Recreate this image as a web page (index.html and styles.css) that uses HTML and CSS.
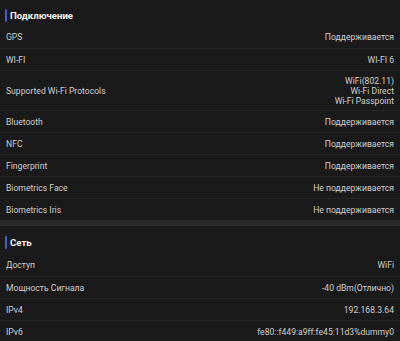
FILE: index.html
```html
<!DOCTYPE html>
<html lang="ru">
<head>
<meta charset="utf-8">
<link rel="stylesheet" href="styles.css">
</head>
<body>
<div class="page">
  <section class="section first">
    <h2 class="header"><span class="mark"></span>Подключение</h2>
    <div class="row"><span class="label">GPS</span><span class="value">Поддерживается</span></div>
    <div class="row"><span class="label">WI-FI</span><span class="value">WI-FI 6</span></div>
    <div class="row tall"><span class="label">Supported Wi-Fi Protocols</span><span class="value">WiFi(802.11)<br>Wi-Fi Direct<br>Wi-Fi Passpoint</span></div>
    <div class="row"><span class="label">Bluetooth</span><span class="value">Поддерживается</span></div>
    <div class="row"><span class="label">NFC</span><span class="value">Поддерживается</span></div>
    <div class="row"><span class="label">Fingerprint</span><span class="value">Поддерживается</span></div>
    <div class="row"><span class="label">Biometrics Face</span><span class="value">Не поддерживается</span></div>
    <div class="row"><span class="label">Biometrics Iris</span><span class="value">Не поддерживается</span></div>
  </section>
  <div class="band"></div>
  <section class="section">
    <h2 class="header"><span class="mark"></span>Сеть</h2>
    <div class="row"><span class="label">Доступ</span><span class="value">WiFi</span></div>
    <div class="row"><span class="label">Мощность Сигнала</span><span class="value">-40 dBm(Отлично)</span></div>
    <div class="row"><span class="label">IPv4</span><span class="value">192.168.3.64</span></div>
    <div class="row"><span class="label">IPv6</span><span class="value">fe80::f449:a9ff:fe45:11d3%dummy0</span></div>
  </section>
</div>
</body>
</html>
```
FILE: styles.css
```css
html, body {
  margin: 0;
  padding: 0;
  background: #1a1a1a;
}
body {
  font-family: Roboto, "Noto Sans", "Liberation Sans", sans-serif;
  font-size: 8.6px;
  color: #cfcfcf;
  overflow: hidden;
}
.page {
  width: 400px;
}
.header {
  margin: 0;
  display: flex;
  align-items: center;
  gap: 3px;
  height: 28px;
  padding: 4px 6px 0 5px;
  box-sizing: border-box;
  font-size: 9.6px;
  font-weight: 700;
  color: #f2f2f2;
}
.first .header {
  height: 26px;
  padding-top: 4px;
}
.mark {
  width: 2px;
  height: 13px;
  background: #3b5fe0;
  border-radius: 1px;
}
.row {
  display: flex;
  justify-content: space-between;
  align-items: center;
  height: 22px;
  padding: 0 6px;
  box-sizing: border-box;
  border-top: 1px solid #262626;
}
.header + .row {
  border-top: none;
}
.row.tall {
  height: 40px;
}
.value {
  text-align: right;
  line-height: 10px;
}
.band {
  height: 6px;
  background: #2b2b2b;
}
```
